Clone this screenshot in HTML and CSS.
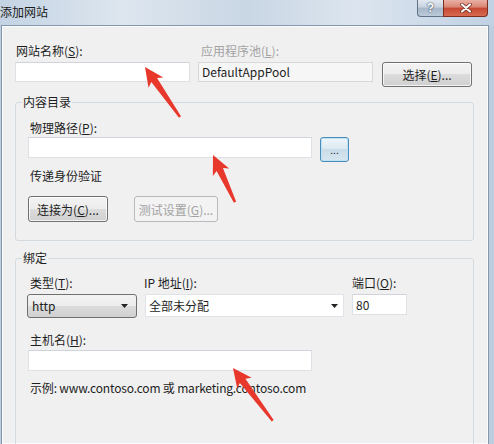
FILE: index.html
```html
<!DOCTYPE html>
<html lang="zh-CN">
<head>
  <meta charset="UTF-8">
  <title>添加网站</title>
  <link rel="stylesheet" href="styles.css">
</head>
<body>

<div class="window">
  <div class="titlebar">
    <span class="title">添加网站</span>
    <div class="caption-btns">
      <span class="cap help">?</span>
      <span class="cap close">
        <svg width="12" height="10" viewBox="0 0 12 10">
          <path d="M2 1.5 L10 8.5 M10 1.5 L2 8.5" stroke="#6b2318" stroke-width="3.6" stroke-linecap="round"/>
          <path d="M2 1.5 L10 8.5 M10 1.5 L2 8.5" stroke="#fff" stroke-width="2.2" stroke-linecap="round"/>
        </svg>
      </span>
    </div>
  </div>

  <div class="frame">
    <div class="client">

      <!-- nom du site + pool -->
      <div class="site-row">
        <label class="lbl lbl-name">网站名称(<u>S</u>):</label>
        <label class="lbl lbl-pool">应用程序池(<u>L</u>):</label>
        <span></span>
        <div class="field"></div>
        <div class="field field-ro">DefaultAppPool</div>
        <button class="btn btn-select">选择(<u>E</u>)...</button>
      </div>

      <fieldset class="group group-content">
        <legend>内容目录</legend>
        <div class="group-body">
          <div class="lbl pad">物理路径(<u>P</u>):</div>
          <div class="path-row">
            <div class="field field-wide"></div>
            <button class="btn btn-dots">...</button>
          </div>
          <div class="lbl pad note">传递身份验证</div>
          <div class="btn-row">
            <button class="btn btn-connect">连接为(<u>C</u>)...</button>
            <button class="btn btn-test" disabled>测试设置(<u>G</u>)...</button>
          </div>
        </div>
      </fieldset>

      <fieldset class="group group-binding">
        <legend>绑定</legend>
        <div class="group-body">
          <div class="bind-grid">
            <label class="lbl lbl-type">类型(<u>T</u>):</label>
            <label class="lbl lbl-ip">IP 地址(<u>I</u>):</label>
            <label class="lbl">端口(<u>O</u>):</label>
            <div class="select select-type">
              <span>http</span>
              <svg width="7" height="4" viewBox="0 0 7 4"><path d="M0 0 H7 L3.5 4 Z" fill="#222"/></svg>
            </div>
            <div class="select select-ip">
              <span>全部未分配</span>
              <svg width="7" height="4" viewBox="0 0 7 4"><path d="M0 0 H7 L3.5 4 Z" fill="#222"/></svg>
            </div>
            <div class="field field-port">80</div>
          </div>
          <div class="lbl pad host-lbl">主机名(<u>H</u>):</div>
          <div class="field field-wide host-field"></div>
          <div class="lbl pad example">示例: www.contoso.com 或 marketing.contoso.com</div>
        </div>
      </fieldset>

    </div>
  </div>

  <!-- flèches d'annotation -->
  <svg class="marks" width="494" height="444" viewBox="0 0 494 444">
    <polygon transform="translate(145 67) rotate(-35)" points="0,0 9,19 3.5,16 1.2,61 -1.2,61 -3.5,16 -9,19" fill="#e8372b"/>
    <polygon transform="translate(213 155) rotate(-25)" points="0,0 9,19 3.5,16 1.2,52 -1.2,52 -3.5,16 -9,19" fill="#e8372b"/>
    <polygon transform="translate(233 368) rotate(-37)" points="0,0 9,19 3.5,16 1.2,66 -1.2,66 -3.5,16 -9,19" fill="#e8372b"/>
  </svg>
</div>

</body>
</html>
```

FILE: styles.css
```css
body {
  margin: 0;
  font-family: "Noto Sans CJK SC", "Noto Sans", sans-serif;
  font-size: 12px;
  line-height: 16px;
  color: #1e1e1e;
}

.window {
  position: relative;
  width: 494px;
  height: 444px;
  overflow: hidden;
  background-color: #bccddf;
}

.titlebar {
  height: 26px;
  display: flex;
  justify-content: space-between;
  align-items: flex-start;
  background: linear-gradient(to right, #c4d3e3, #dde6ef 25%, #c9d6e4 50%, #dce5ef 72%, #c0d1e3);
}

.title {
  padding-top: 4px;
  color: #1a1a1a;
}

.caption-btns {
  display: flex;
  margin-right: 6px;
}

.cap {
  height: 17px;
  box-sizing: border-box;
  display: flex;
  justify-content: center;
  align-items: center;
}

.help {
  width: 26px;
  border: 1px solid #5f7287;
  border-top: none;
  border-right: none;
  border-radius: 0 0 0 4px;
  background: linear-gradient(#e1e8f0, #c8d3df 45%, #a7b7c9 50%, #bccad9);
  color: #fff;
  font-family: "Liberation Sans", sans-serif;
  font-weight: bold;
  font-size: 12px;
  text-shadow: 0 0 2px #3d4c5e, 0 0 1px #3d4c5e;
}

.close {
  width: 45px;
  border: 1px solid #7d2e22;
  border-top: none;
  border-radius: 0 0 4px 0;
  background: linear-gradient(#eab0a6, #d98572 45%, #c64832 50%, #d66a50);
}

.frame {
  height: 418px;
  padding: 0 6px 0 2px;
}

.client {
  height: 100%;
  box-sizing: border-box;
  background-color: #f0f0f0;
  border: 1px solid #fbfcfd;
  box-shadow: 0 0 0 1px #8497ad;
  padding-top: 16px;
}

u {
  text-decoration: underline;
  text-underline-offset: 1px;
}

.lbl {
  display: block;
  line-height: 16px;
}

.pad {
  padding-left: 2px;
}

.site-row {
  display: grid;
  grid-template-columns: 175px 175px 91px;
  column-gap: 8px;
  row-gap: 3px;
  margin-left: 12px;
  align-items: start;
}

.lbl-name {
  padding-left: 1px;
}

.lbl-pool {
  padding-left: 3px;
  color: #a3a3a3;
}

.field {
  height: 20px;
  box-sizing: border-box;
  background-color: #fff;
  border: 1px solid #dde1e6;
  border-top-color: #cfd4da;
  padding-left: 3px;
  line-height: 18px;
}

.field-ro {
  background-color: #f6f6f6;
  border-color: #d8d8d8;
  padding-left: 3px;
}

.btn {
  font-family: inherit;
  font-size: 12px;
  color: #1e1e1e;
  padding: 0;
  border: 1px solid #707070;
  border-radius: 3px;
  background: linear-gradient(#f3f3f3, #ececec 48%, #dcdcdc 50%, #d0d0d0);
  box-shadow: inset 0 0 0 1px rgba(255, 255, 255, 0.75);
}

.btn-select {
  height: 25px;
  margin-left: 1px;
}

.group {
  border: 1px solid #d3dbe1;
  border-radius: 3px;
  margin: 7px 13px 0 12px;
  padding: 0 0 18px 6px;
  min-width: 0;
}

.group legend {
  padding: 0 1px;
  line-height: 16px;
}

.group-body {
  padding: 10px 0 0 6px;
}

.path-row {
  display: flex;
  align-items: flex-start;
  gap: 8px;
  margin-top: 1px;
}

.field-wide {
  width: 284px;
  height: 21px;
}

.btn-dots {
  width: 29px;
  height: 25px;
  border-color: #4a8dbb;
  background: linear-gradient(#eef6fb, #dce9f1 48%, #cadce8 50%, #d6e6f0);
  box-shadow: inset 0 0 0 1px #bfe1f3;
  font-size: 10px;
  line-height: 10px;
}

.note {
  margin-top: 6px;
}

.btn-row {
  display: flex;
  gap: 26px;
  margin-top: 12px;
}

.btn-connect {
  width: 80px;
  height: 26px;
}

.btn-test {
  width: 84px;
  height: 26px;
  border-color: #b6babd;
  background: #f3f3f3;
  color: #a2a2a2;
  box-shadow: none;
}

.group-binding {
  margin-top: 9px;
  padding-bottom: 120px;
}

.group-binding .group-body {
  padding-top: 9px;
}

.bind-grid {
  display: grid;
  grid-template-columns: 110px 199px 55px;
  column-gap: 8px;
  row-gap: 3px;
  margin-left: -1px;
  align-items: start;
}

.lbl-type {
  padding-left: 3px;
}

.lbl-ip {
  margin-left: -1px;
}

.select {
  box-sizing: border-box;
  display: flex;
  justify-content: space-between;
  align-items: center;
}

.select-type {
  height: 24px;
  padding: 0 8px 0 4px;
  border: 1px solid #707070;
  border-radius: 3px;
  background: linear-gradient(#f3f3f3, #ececec 48%, #dcdcdc 50%, #d0d0d0);
}

.select-ip {
  height: 23px;
  padding: 0 5px 0 3px;
  background-color: #fff;
  border: 1px solid #e0e3e7;
}

.field-port {
  height: 21px;
  line-height: 19px;
}

.host-lbl {
  margin-top: 14px;
}

.host-field {
  margin-top: 2px;
}

.example {
  margin-top: 9px;
  letter-spacing: -0.18px;
}

.marks {
  position: absolute;
  top: 0;
  left: 0;
}
```
